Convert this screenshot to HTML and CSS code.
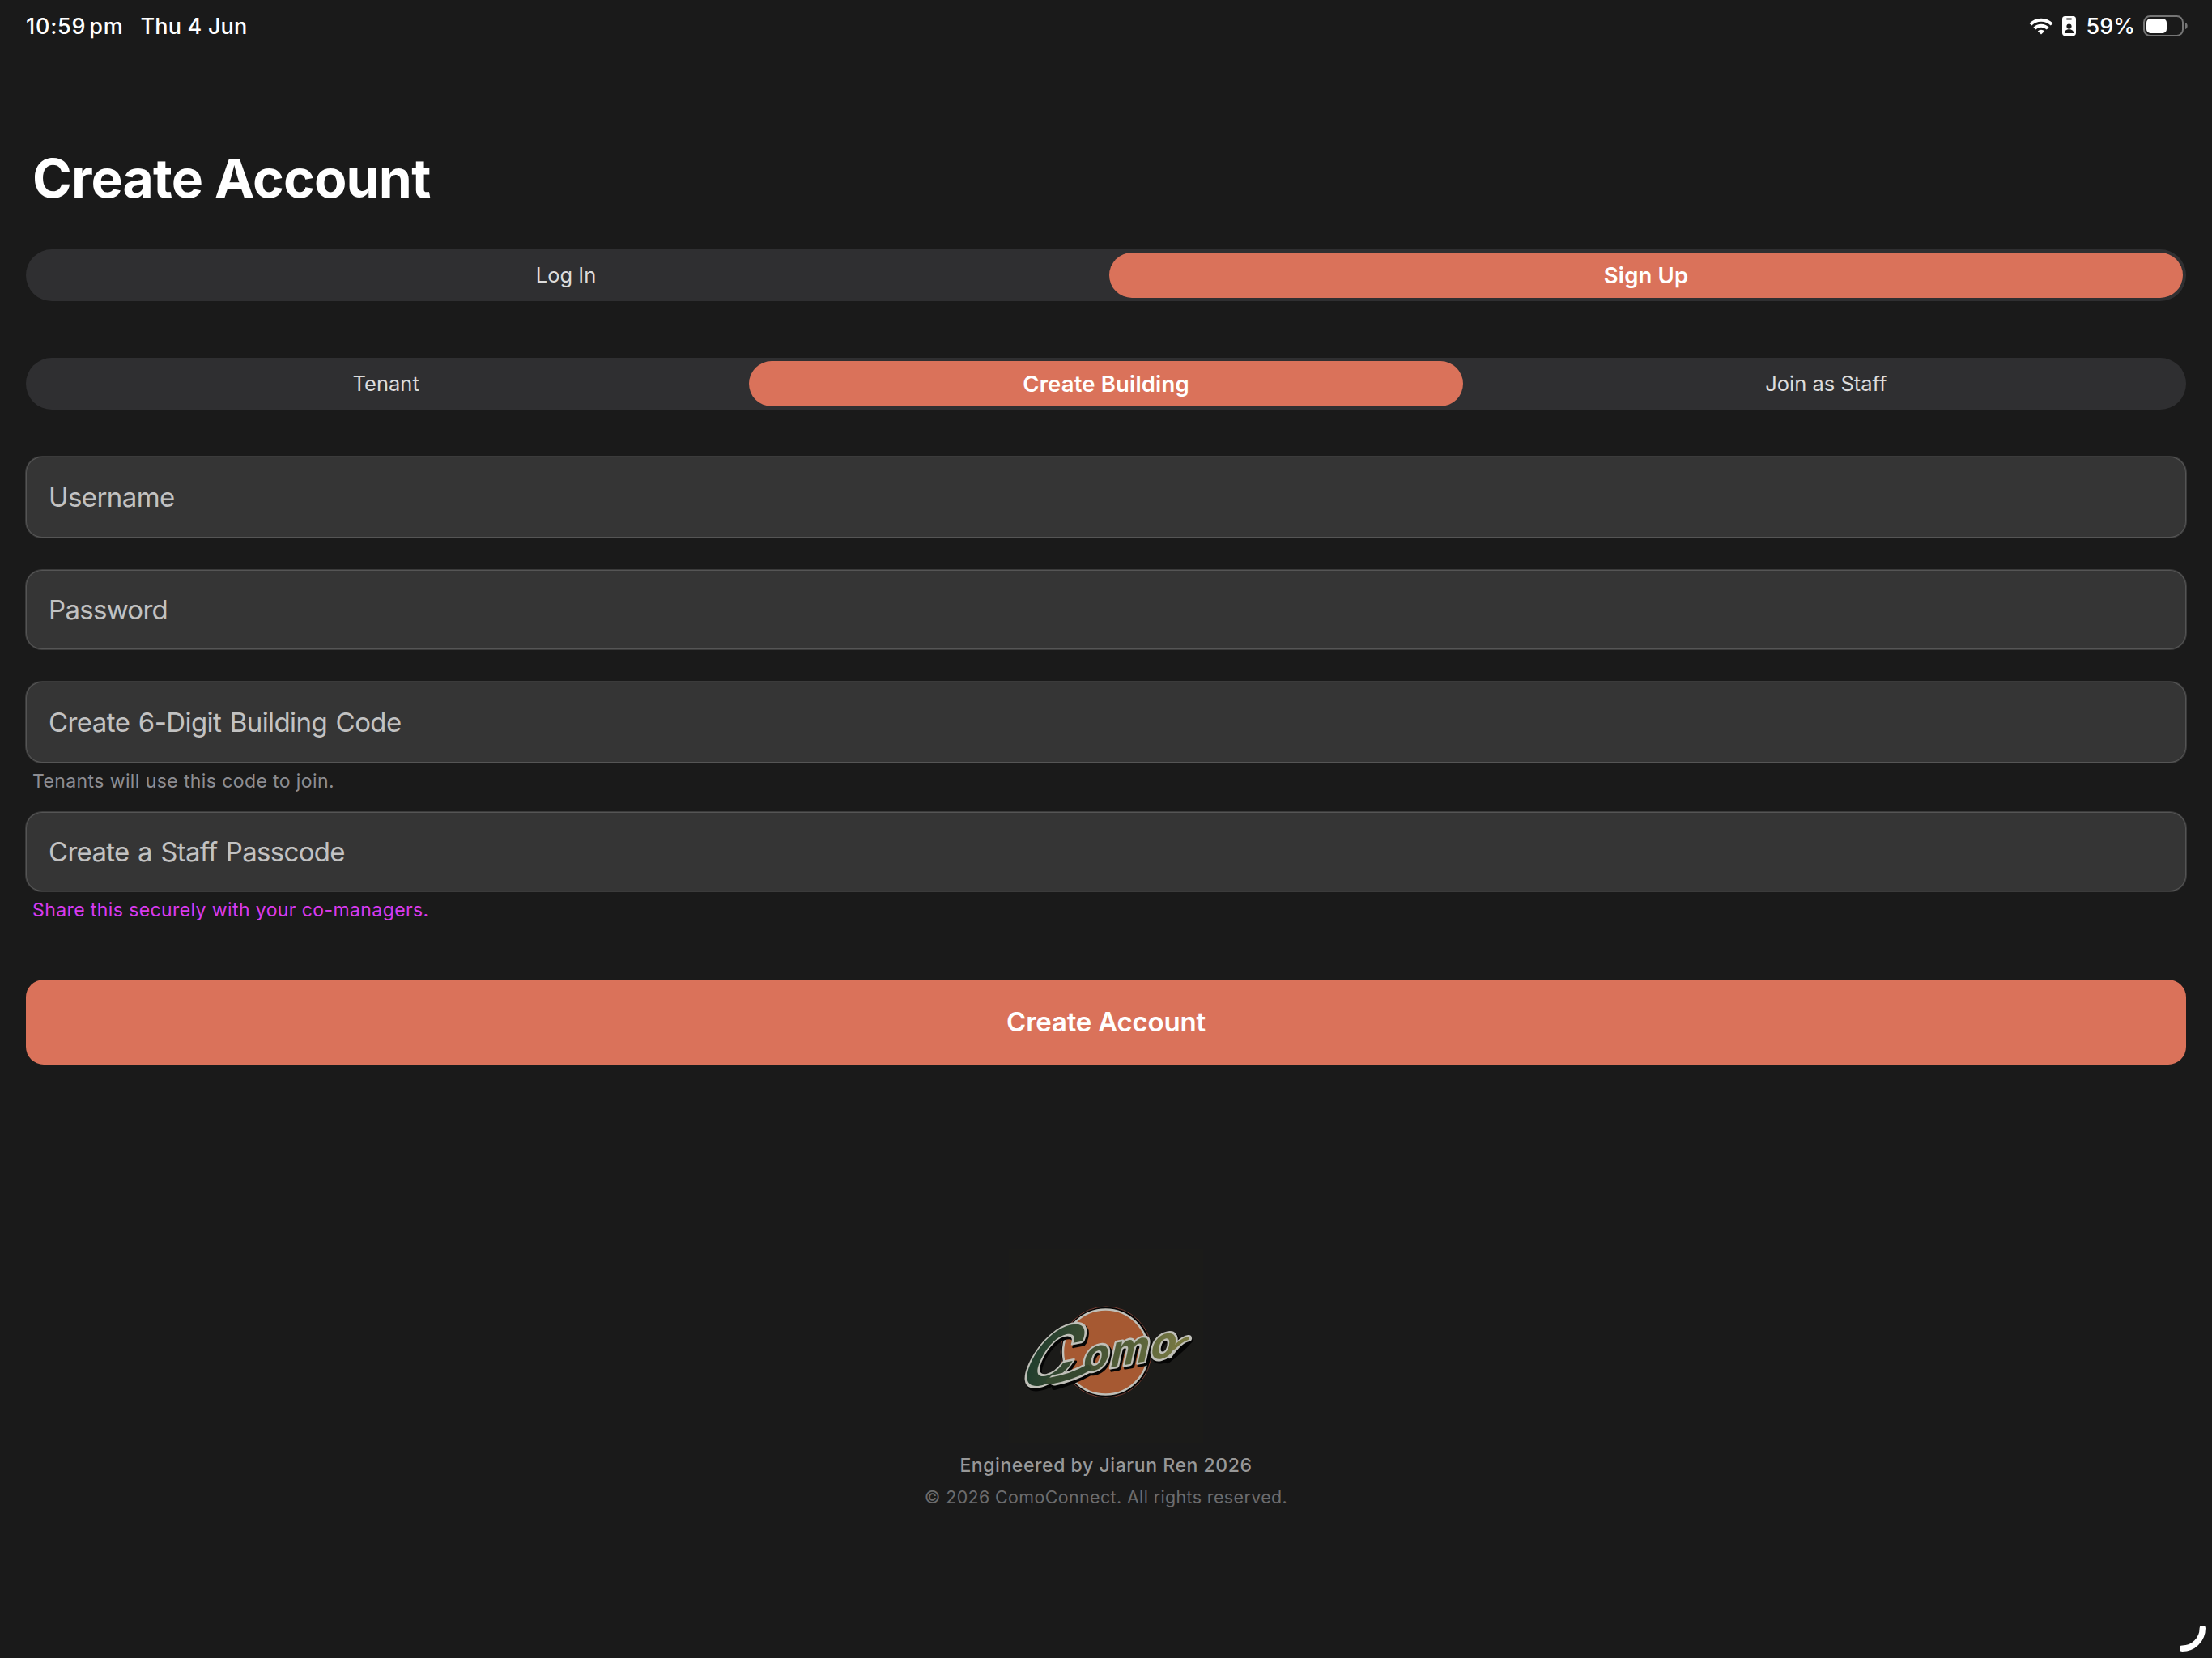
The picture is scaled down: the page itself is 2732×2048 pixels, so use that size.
FILE: index.html
```html
<!DOCTYPE html>
<html lang="en">
<head>
<meta charset="utf-8">
<title>Create Account</title>
<link rel="stylesheet" href="styles.css">
</head>
<body>
<header class="status">
  <div class="status-left"><span class="time">10:59<span class="pm">pm</span></span><span class="date">Thu 4 Jun</span></div>
  <div class="status-right">
    <svg class="wifi" width="30" height="21" viewBox="0 0 30 21"><g fill="none" stroke="#fff" stroke-width="4"><path d="M1.800 8.200a18.600 18.600 0 0 1 26.400 0"/><path d="M6.800 13.200a11.600 11.600 0 0 1 16.400 0"/></g><path d="M15 20.500l-4.200-4.100a6 6 0 0 1 8.400 0z" fill="#fff"/></svg>
    <svg class="badge" width="17" height="24" viewBox="0 0 17 24"><rect width="17" height="24" rx="3.600" fill="#fff"/><rect x="5" y="2.600" width="7" height="1.900" rx=".9" fill="#1a1a1a"/><circle cx="8.500" cy="12.600" r="3.100" fill="#1a1a1a"/><path d="M2.900 21c0-3.300 2.300-4.800 5.600-4.800s5.600 1.500 5.600 4.800z" fill="#1a1a1a"/></svg>
    <span class="percent">59%</span>
    <svg class="battery" width="56" height="26" viewBox="0 0 56 26"><rect x="1" y="1" width="48" height="24" rx="7.500" fill="none" stroke="#757575" stroke-width="2"/><path d="M52 9c3.600 1 3.600 7 0 8z" fill="#757575"/><rect x="4" y="4" width="25" height="18" rx="5" fill="#fff"/></svg>
  </div>
</header>
<main class="page">
  <h1 class="title">Create Account</h1>
  <nav class="segmented mode"><span class="segment">Log In</span><span class="segment active">Sign Up</span></nav>
  <nav class="segmented role"><span class="segment">Tenant</span><span class="segment active">Create Building</span><span class="segment">Join as Staff</span></nav>
  <form class="form">
    <div class="field">Username</div>
    <div class="field short">Password</div>
    <div class="field">Create 6-Digit Building Code</div>
    <p class="hint">Tenants will use this code to join.</p>
    <div class="field short">Create a Staff Passcode</div>
    <p class="hint accent">Share this securely with your co-managers.</p>
    <div class="submit">Create Account</div>
  </form>
</main>
<footer class="footer">
  <svg class="logo" width="240" height="240" viewBox="0 0 240 240">
    <defs>
      <linearGradient id="deep" gradientUnits="userSpaceOnUse" x1="0" y1="0" x2="75" y2="-20"><stop offset="0" stop-color="#1c3b2c"/><stop offset="1" stop-color="#3f4e33"/></linearGradient>
      <linearGradient id="olive" gradientUnits="userSpaceOnUse" x1="0" y1="0" x2="125" y2="0"><stop offset="0" stop-color="#3f4e33"/><stop offset=".6" stop-color="#5d663b"/><stop offset="1" stop-color="#7a7a44"/></linearGradient>
    </defs>
    <rect width="240" height="240" fill="#1b1b19"/>
    <circle cx="120" cy="127" r="56" fill="#050505" stroke="#713c31"/>
    <circle cx="119.500" cy="127" r="52.500" fill="#a65932" stroke="#bfbfb8" stroke-width="2.500"/>
    <g class="wordmark-shadow">
      <path d="M196 138Q210 128 224 113" class="tail-shadow"/>
      <path d="M56 171Q80 165 101 153" class="tail-shadow"/>
      <text class="initial" transform="translate(8 177) rotate(-11) skewX(-38)">C</text>
      <text class="rest" transform="translate(91 155) rotate(-10) skewX(-22)">omo</text>
    </g>
    <g class="wordmark">
      <text class="initial" fill="url(#deep)" transform="translate(6 174) rotate(-11) skewX(-38)">C</text>
      <path d="M56 162Q78 158 99 146" class="join-edge"/>
      <path d="M198 131Q211 112 222 110" class="tail-edge"/>
      <text class="rest" fill="url(#olive)" transform="translate(89 152.500) rotate(-10) skewX(-22)">omo</text>
    </g>
    <path d="M50 163Q78 158 97 147" class="join"/>
    <path d="M204 122Q212 113 221 110" class="tail"/>
  </svg>
  <p class="credit">Engineered by Jiarun Ren 2026</p>
  <p class="rights">© 2026 ComoConnect. All rights reserved.</p>
</footer>
<svg class="corner" width="34" height="34" viewBox="0 0 34 34"><path d="M28 3A25 25 0 0 1 3 28" transform="translate(.3 .3)" fill="none" stroke="#fff" stroke-width="7.400" stroke-linecap="round"/></svg>
</body>
</html>
```
FILE: styles.css
```css
* { box-sizing: border-box; }
body { margin: 0; width: 2732px; height: 2048px; overflow: hidden; background: #1a1a1a; color: #fff; font-family: Inter, "Liberation Sans", sans-serif; display: flex; flex-direction: column; position: relative; }
h1, p { margin: 0; }

.status { height: 64px; padding: 0 29px 0 32px; display: flex; justify-content: space-between; align-items: center; font-size: 27px; font-weight: 500; letter-spacing: .25px; white-space: nowrap; }
.status-left, .status-right { display: flex; align-items: center; }
.time { letter-spacing: .75px; }
.date { margin-left: 21px; letter-spacing: .2px; }
.pm { margin-left: 4px; }
.badge { margin-left: 11px; }
.percent { margin-left: 12px; letter-spacing: 0; }
.battery { margin-left: 10px; }

.page { padding: 0 32px; }
.title { margin: 116px 0 0 8px; height: 80px; line-height: 80px; font-size: 66px; font-weight: 700; letter-spacing: -.83px; }

.segmented { height: 64px; padding: 4px 0; border-radius: 32px; background: #2f2f31; display: grid; }
.mode { margin-top: 48px; grid-template-columns: repeat(2, 1fr); }
.role { margin-top: 70px; grid-template-columns: repeat(3, 1fr); }
.segment { display: flex; align-items: center; justify-content: center; padding-bottom: 2px; font-size: 25.5px; margin: 0 4px; border-radius: 28px; color: #dcdcdc; }
.segment.active { padding-bottom: 0; background: #da725a; color: #fff; font-size: 27.5px; font-weight: 600; letter-spacing: .15px; }

.form { margin-top: 58px; display: flex; flex-direction: column; }
.field { height: 100px; border-radius: 20px; background: #353535; box-shadow: 0 0 0 1px #3b3b3b, inset 0 0 0 1px #555; padding-left: 28px; display: flex; align-items: center; font-size: 33px; letter-spacing: -.58px; word-spacing: 1.8px; color: #c2c2c2; margin-bottom: 40px; }
.short { height: 98px; letter-spacing: -.7px; }
.hint { font-size: 23px; letter-spacing: .4px; line-height: 30px; margin: -32px 0 23px 8px; color: #8d8d92; }
.accent { margin-bottom: 71px; color: #d93aef; }
.submit { height: 105px; padding-bottom: 2px; border-radius: 22px; background: #da725a; display: flex; align-items: center; justify-content: center; font-size: 33px; font-weight: 600; letter-spacing: -.2px; }

.footer { margin-top: 228px; display: flex; flex-direction: column; align-items: center; }
.logo { display: block; overflow: visible; }
.initial { font-size: 89px; font-weight: 600; }
.rest { font-size: 53px; font-weight: 700; letter-spacing: 2px; }
.wordmark text { stroke: #bfbfb8; stroke-width: 5px; stroke-linejoin: round; paint-order: stroke; }
.wordmark-shadow text { fill: #050505; stroke: #050505; stroke-width: 6px; stroke-linejoin: round; }
.tail, .tail-edge, .tail-shadow, .join, .join-edge { fill: none; stroke-linecap: round; }
.tail { stroke: #77773f; stroke-width: 4px; }
.tail-edge { stroke: #bfbfb8; stroke-width: 8px; }
.tail-shadow { stroke: #050505; stroke-width: 6px; }
.join { stroke: #35482f; stroke-width: 8px; }
.join-edge { stroke: #bfbfb8; stroke-width: 13px; }
.credit { margin-top: 12px; line-height: 30px; font-size: 23px; font-weight: 500; letter-spacing: .57px; color: #989898; }
.rights { margin-top: 9px; line-height: 30px; font-size: 21.4px; letter-spacing: .4px; color: #6c6c6e; }
.corner { position: absolute; right: 6px; bottom: 6px; }
```
